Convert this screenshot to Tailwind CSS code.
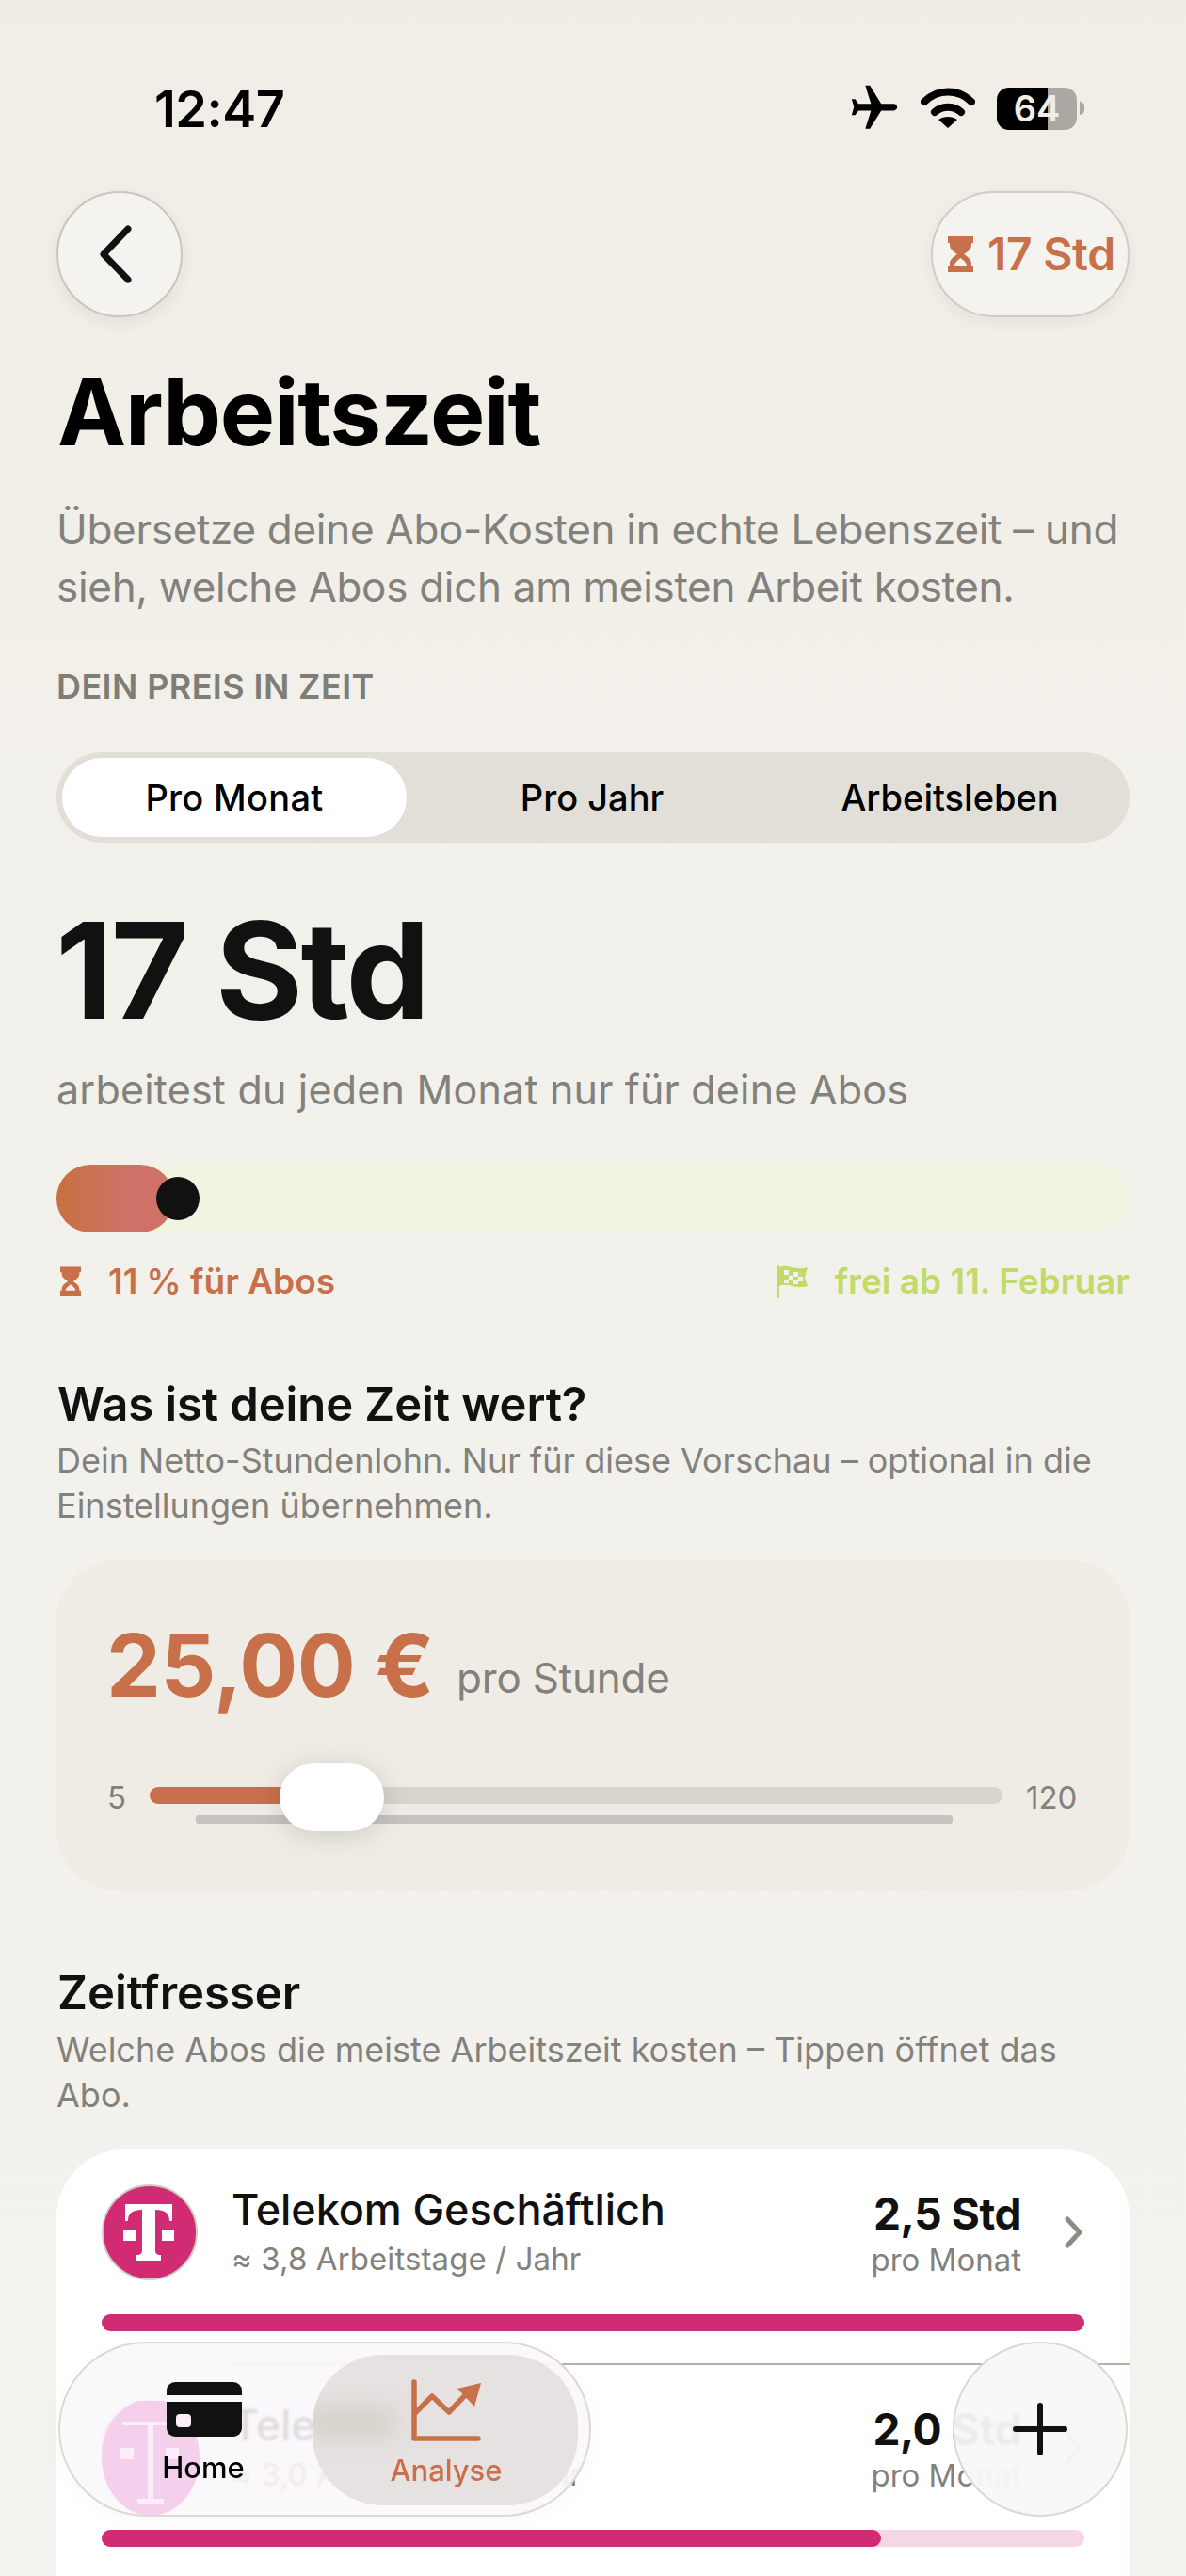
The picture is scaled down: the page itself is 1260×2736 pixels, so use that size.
<!DOCTYPE html>
<html lang="de">
<head>
<meta charset="utf-8">
<script src="https://cdn.jsdelivr.net/npm/@tailwindcss/browser@4"></script>
<title>Arbeitszeit</title>
</head>
<body class="m-0">
<div class="relative w-[1260px] h-[2736px] overflow-hidden font-['Inter','Liberation_Sans',sans-serif] bg-gradient-to-b from-[#f1ece6] via-[#f2f0ea] via-30% to-[#f3f2ee] text-[#111]">

  <!-- status bar -->
  <div class="h-[203px] relative">
    <div class="absolute left-[164px] top-[84px] text-[54px] leading-[64px] font-semibold tracking-[-0.5px] text-black">12:47</div>
    <div class="absolute left-[900px] top-[92px] flex items-center h-[46px]">
      <svg class="w-[58px] h-[58px] text-black" viewBox="0 0 24 24" fill="currentColor"><path transform="rotate(90 12 12)" d="M21 16v-2l-8-5V3.5c0-.83-.67-1.5-1.5-1.5S10 2.67 10 3.5V9l-8 5v2l8-2.5V19l-2 1.5V22l3.5-1 3.5 1v-1.5L13 19v-5.5l8 2.5z"/></svg>
      <svg class="w-[58px] h-[46px] ml-[20px]" viewBox="0 0 58 46" fill="none" stroke="#000" stroke-width="8" stroke-linecap="round"><path d="M4 16C18 2 40 2 54 16"/><path d="M15 27c8-7 20-7 28 0" /><path d="M29 44l-10-9c6-4 14-4 20 0z" fill="#000" stroke="none"/></svg>
      <div class="relative ml-[23px] w-[85px] h-[45px] rounded-[13px] overflow-hidden bg-[#aaa8a3]">
        <div class="absolute left-0 top-0 bottom-0 w-[54px] bg-black"></div>
        <div class="absolute inset-0 flex items-center justify-center text-[38px] font-semibold text-[#f1ece6] leading-none">64</div>
      </div>
      <div class="ml-[3px] w-[5px] h-[14px] rounded-r-full bg-[#aaa8a3]"></div>
    </div>
  </div>

  <div class="px-[60px]">
    <!-- header -->
    <div class="flex justify-between h-[134px]">
      <div class="w-[134px] h-[134px] rounded-full bg-[#f4f3ef] border-2 border-[#c9c6c0] shadow-[0_6px_16px_rgba(80,60,40,0.08)] flex items-center justify-center">
        <svg class="w-[44px] h-[64px] -ml-[10px]" viewBox="0 0 44 64" fill="none" stroke="#111" stroke-width="7" stroke-linecap="round" stroke-linejoin="round"><path d="M36 5 10 32l26 27"/></svg>
      </div>
      <div class="w-[211px] h-[134px] rounded-full bg-[#f4f3ef] border-2 border-[#d0cdc7] shadow-[0_6px_16px_rgba(80,60,40,0.06)] flex items-center justify-center gap-[15px] pl-[3px]">
        <svg class="w-[27px] h-[38px]" viewBox="0 0 27 38" fill="#c8704a"><path d="M0 0h27v7h-2v2c0 5-5 8-8 10 3 2 8 5 8 10v2h2v7H0v-7h2v-2c0-5 5-8 8-10-3-2-8-5-8-10V7H0z"/><path d="M7 31c0-3 4-6 6.500-8 2.500 2 6.500 5 6.500 8z" fill="#f4f3ef"/></svg>
        <span class="text-[48px] leading-none font-semibold text-[#c8704a] tracking-[-0.3px]">17 Std</span>
      </div>
    </div>

    <h1 class="mt-[46px] ml-[1px] text-[98px] leading-[110px] font-bold tracking-[-1.2px] text-black">Arbeitszeit</h1>

    <p class="mt-[39px] text-[44px] leading-[61px] text-[#83817b] tracking-[-0.3px] whitespace-nowrap">Übersetze deine Abo-Kosten in echte Lebenszeit – und<br>sieh, welche Abos dich am meisten Arbeit kosten.</p>

    <div class="mt-[53px] text-[36px] leading-[44px] font-semibold text-[#7f7d76] tracking-[0.4px]">DEIN PREIS IN ZEIT</div>

    <!-- segmented -->
    <div class="mt-[48px] h-[96px] rounded-full bg-[#e2dfd9] p-[6px] grid grid-cols-[366px_1fr_1fr] items-center text-[38px] font-[450] text-black">
      <div class="h-[84px] rounded-full bg-white flex items-center justify-center tracking-[0.3px]">Pro Monat</div>
      <div class="flex items-center justify-center pl-[13px]">Pro Jahr</div>
      <div class="flex items-center justify-center pl-[11px]">Arbeitsleben</div>
    </div>

    <div class="mt-[60px] -ml-[1px] text-[142px] leading-[150px] font-bold tracking-[-2.5px] text-[#111]">17 Std</div>

    <div class="mt-[25px] text-[43px] leading-[54px] text-[#83817b] tracking-[0.2px]">arbeitest du jeden Monat nur für deine Abos</div>

    <!-- time bar -->
    <div class="relative mt-[53px] h-[72px] rounded-full bg-[#f1f4e0]">
      <div class="w-[125px] h-[72px] rounded-full bg-gradient-to-r from-[#c8703f] via-[#cf7166] via-60% to-[#cf7166]"></div>
      <div class="absolute left-[106px] top-[13px] w-[46px] h-[46px] rounded-full bg-[#111]"></div>
    </div>

    <div class="mt-[29px] flex justify-between items-center h-[46px] text-[37px] font-semibold tracking-[0px]">
      <div class="flex items-center gap-[29px] pl-[4px] text-[#c8704a]">
        <svg class="w-[22px] h-[32px]" viewBox="0 0 27 38" fill="#c8704a"><path d="M0 0h27v7h-2v2c0 5-5 8-8 10 3 2 8 5 8 10v2h2v7H0v-7h2v-2c0-5 5-8 8-10-3-2-8-5-8-10V7H0z"/><path d="M7 31c0-3 4-6 6.500-8 2.500 2 6.500 5 6.500 8z" fill="#f3f1ec"/></svg>
        <span>11 % für Abos</span>
      </div>
      <div class="flex items-center gap-[29px] text-[#c2da6a]">
        <svg class="w-[33px] h-[36px]" viewBox="0 0 33 36" fill="#c2da6a"><path d="M0 1h3v35H0z"/><path d="M3 3c9-4 16 4 30 0l-3 11 3 9c-12 4-20-4-30 0z"/><g fill="#f3f1ec"><rect x="8" y="6" width="5" height="5"/><rect x="18" y="8" width="5" height="5"/><rect x="13" y="12" width="5" height="5"/><rect x="23" y="13" width="5" height="5"/><rect x="8" y="16" width="5" height="4"/><rect x="18" y="17" width="5" height="4"/></g></svg>
        <span>frei ab 11. Februar</span>
      </div>
    </div>

    <!-- Zeit wert -->
    <h2 class="mt-[78px] ml-[1px] text-[49px] leading-[60px] font-semibold tracking-[-0.1px] text-[#111]">Was ist deine Zeit wert?</h2>
    <p class="mt-[5px] text-[36px] leading-[48px] text-[#83817b] whitespace-nowrap">Dein Netto-Stundenlohn. Nur für diese Vorschau – optional in die<br>Einstellungen übernehmen.</p>

    <div class="relative mt-[34px] h-[351px] rounded-[64px] bg-[#efece5]">
      <div class="absolute left-[53px] top-[57px] flex items-baseline gap-[24px]">
        <span class="text-[92px] leading-[110px] font-bold text-[#c8704a] tracking-[-0.5px]">25,00 €</span>
        <span class="text-[44px] leading-[54px] text-[#83817b] tracking-[-0.2px] -translate-y-[4px]">pro Stunde</span>
      </div>
      <div class="absolute left-[54px] top-[232px] text-[33px] leading-[40px] text-[#83817b]">5</div>
      <div class="absolute left-[99px] top-[241px] w-[906px] h-[18px] rounded-full bg-[#d7d4cc]">
        <div class="w-[200px] h-[18px] rounded-full bg-[#c8704a]"></div>
      </div>
      <div class="absolute left-[148px] top-[271px] w-[804px] h-[9px] rounded-[3px] bg-[#c4c3bf]"></div>
      <div class="absolute left-[237px] top-[216px] w-[111px] h-[72px] rounded-full bg-white shadow-[0_4px_28px_rgba(0,0,0,0.14)]"></div>
      <div class="absolute left-[1030px] top-[232px] text-[33px] leading-[40px] text-[#83817b]">120</div>
    </div>

    <!-- Zeitfresser -->
    <h2 class="mt-[79px] ml-[1px] text-[49px] leading-[60px] font-semibold tracking-[0px] text-[#111]">Zeitfresser</h2>
    <p class="mt-[6px] text-[36px] leading-[48px] text-[#83817b] whitespace-nowrap">Welche Abos die meiste Arbeitszeit kosten – Tippen öffnet das<br>Abo.</p>

    <div class="mt-[34px] rounded-t-[72px] bg-white h-[600px]">
      <!-- row 1 -->
      <div class="relative px-[48px] pt-[37px] pb-[36px]">
        <div class="flex items-center h-[102px]">
          <svg class="w-[102px] h-[102px] shrink-0" viewBox="0 0 102 102"><circle cx="51" cy="51" r="50" fill="#d02b73" stroke="#cfccc6" stroke-width="2"/><g fill="#fff"><path d="M25 21h50v18h-3c0-7-3-12-15-12v43c0 3 1 5 6 5v6H37v-6c5 0 6-2 6-5V27c-12 0-15 5-15 12h-3z"/><rect x="23" y="48" width="13" height="12"/><rect x="64" y="48" width="13" height="12"/></g></svg>
          <div class="ml-[36px] flex-1">
            <div class="-mt-[4px] text-[45px] leading-[56px] font-medium tracking-[-0.1px] text-[#111]">Telekom Geschäftlich</div>
            <div class="mt-[4px] text-[33px] leading-[40px] text-[#83817b] tracking-[0.1px]">≈ 3,8 Arbeitstage / Jahr</div>
          </div>
          <div class="text-right">
            <div class="text-[46px] leading-[56px] font-bold tracking-[-0.4px] text-[#111]">2,5 Std</div>
            <div class="mt-[1px] text-[33px] leading-[40px] text-[#83817b]">pro Monat</div>
          </div>
          <svg class="ml-[45px] mr-[2px] w-[20px] h-[34px] shrink-0" viewBox="0 0 20 34" fill="none" stroke="#8d8b86" stroke-width="5" stroke-linecap="round" stroke-linejoin="round"><path d="M4 3l13 14L4 31"/></svg>
        </div>
        <div class="mt-[36px] h-[18px] rounded-full bg-[#d02b73]"></div>
        <div class="absolute left-[187px] right-0 bottom-0 h-[2px] bg-[#b3b1ac]"></div>
      </div>
      <!-- row 2 -->
      <div class="px-[48px] pt-[37px]">
        <div class="flex items-center h-[102px]">
          <svg class="w-[102px] h-[102px] shrink-0" viewBox="0 0 102 102"><circle cx="51" cy="51" r="50" fill="#d02b73" stroke="#cfccc6" stroke-width="2"/><g fill="#fff"><path d="M25 21h50v18h-3c0-7-3-12-15-12v43c0 3 1 5 6 5v6H37v-6c5 0 6-2 6-5V27c-12 0-15 5-15 12h-3z"/><rect x="23" y="48" width="13" height="12"/><rect x="64" y="48" width="13" height="12"/></g></svg>
          <div class="ml-[36px] flex-1">
            <div class="-mt-[4px] text-[45px] leading-[56px] font-medium tracking-[-0.1px] text-[#111]">Telekom Privat</div>
            <div class="mt-[4px] text-[33px] leading-[40px] text-[#83817b] tracking-[0.1px]">≈ 3,0 Arbeitstage / Jahr</div>
          </div>
          <div class="text-right">
            <div class="text-[46px] leading-[56px] font-bold tracking-[-0.4px] text-[#111]">2,0 Std</div>
            <div class="mt-[1px] text-[33px] leading-[40px] text-[#83817b]">pro Monat</div>
          </div>
          <svg class="ml-[45px] mr-[2px] w-[20px] h-[34px] shrink-0" viewBox="0 0 20 34" fill="none" stroke="#8d8b86" stroke-width="5" stroke-linecap="round" stroke-linejoin="round"><path d="M4 3l13 14L4 31"/></svg>
        </div>
        <div class="mt-[36px] h-[18px] rounded-full bg-[#f5d6e6]">
          <div class="w-[828px] h-[18px] rounded-full bg-[#d02b73]"></div>
        </div>
      </div>
    </div>
  </div>

  <!-- floating nav -->
  <div class="absolute left-[62px] top-[2487px] w-[566px] h-[186px] rounded-full border-2 border-[#dcd9d4] bg-[#fbf7fa]/88 backdrop-blur-[1.5px] shadow-[0_4px_20px_rgba(0,0,0,0.03)]">
    <div class="absolute inset-0 rounded-full overflow-hidden">
      <svg class="absolute left-[44px] top-[61px] w-[104px] h-[124px]" viewBox="0 0 104 124"><ellipse cx="52" cy="60" rx="52" ry="62" fill="#f5d0ec"/><g fill="#fbeef8"><path d="M22 22h60v4H55v78h11v6H38v-6h11V26H22z"/><rect x="20" y="50" width="14" height="12"/><rect x="68" y="50" width="14" height="12"/></g></svg>
      <div class="absolute left-[268px] top-[12px] w-[282px] h-[160px] rounded-[74px] bg-[#e6e2e1] overflow-hidden">
        <div class="absolute left-[-10px] top-[56px] w-[100px] h-[32px] rounded-full bg-[#d4d1c9] blur-md"></div>
      </div>
    </div>
    <div class="absolute left-[92px] top-[41px] w-[120px] flex flex-col items-center">
      <svg class="w-[80px] h-[58px] ml-[2px]" viewBox="0 0 80 58"><path d="M9 0h62a9 9 0 0 1 9 9v5H0V9a9 9 0 0 1 9-9z" fill="#111"/><path d="M0 21h80v28a9 9 0 0 1-9 9H9a9 9 0 0 1-9-9z" fill="#111"/><rect x="10" y="34" width="16" height="14" rx="4" fill="#fbeef6"/></svg>
      <span class="mt-[15px] text-[31px] leading-[36px] font-medium text-black">Home</span>
    </div>
    <div class="absolute left-[328px] top-[38px] w-[164px] flex flex-col items-center">
      <svg class="w-[76px] h-[66px]" viewBox="0 0 76 66" fill="none" stroke="#c8704a" stroke-width="5.500" stroke-linecap="round" stroke-linejoin="round"><path d="M4 3v60h68"/><path d="M5 36l18-18 18 17 22-23"/><path d="M50 10l25-6-7 25z" fill="#c8704a" stroke="none"/></svg>
      <span class="mt-[13px] text-[31px] leading-[36px] font-medium text-[#c8704a]">Analyse</span>
    </div>
  </div>

  <div class="absolute left-[1012px] top-[2487px] w-[186px] h-[186px] rounded-full border-2 border-[#dcd9d4] bg-[#f9f7f7]/95 backdrop-blur-[1.5px] flex items-center justify-center">
    <svg class="w-[58px] h-[56px]" viewBox="0 0 58 56" fill="none" stroke="#111" stroke-width="6" stroke-linecap="round"><path d="M29 3v50M3 28h52"/></svg>
  </div>
</div>
</body>
</html>
